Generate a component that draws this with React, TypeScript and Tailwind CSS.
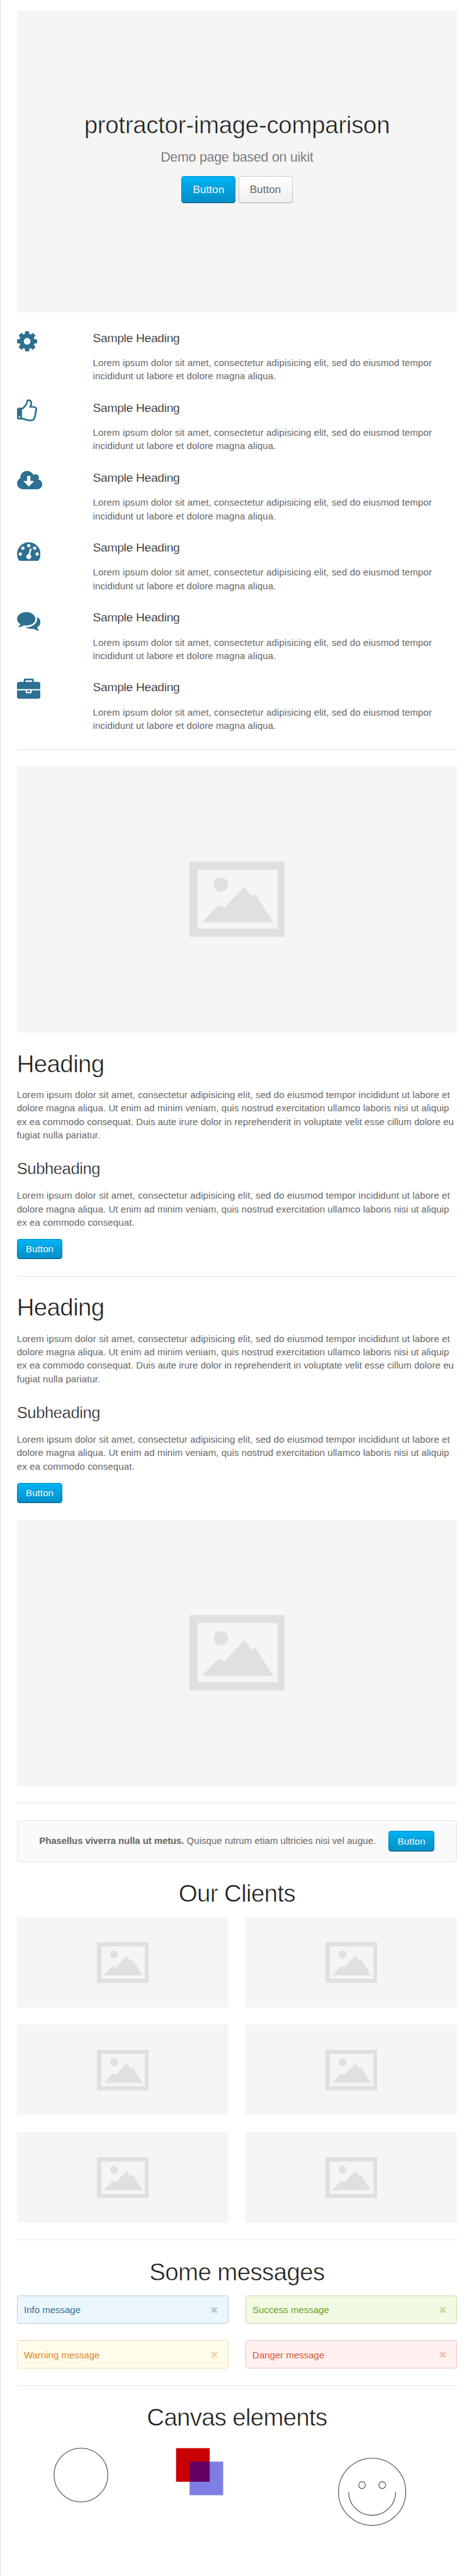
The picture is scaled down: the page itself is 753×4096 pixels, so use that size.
import type { ReactNode } from "react";

const icons = {
  cog: {
    box: "128 0 1536 1792",
    size: "h-[37.4px] w-[32.1px]",
    d: "M1152 896q0-106-75-181t-181-75-181 75-75 181 75 181 181 75 181-75 75-181zm512-109v222q0 12-8 23t-20 13l-185 28q-19 54-39 91 35 50 107 138 10 12 10 25t-9 23q-27 37-99 108t-94 71q-12 0-26-9l-138-108q-44 23-91 38-16 136-29 186-7 28-36 28h-222q-14 0-24.5-8.5t-11.5-21.5l-28-184q-49-16-90-37l-141 107q-10 9-25 9-14 0-25-11-126-114-165-168-7-10-7-23 0-12 8-23 15-21 51-66.5t54-70.5q-27-50-41-99l-183-27q-13-2-21-12.5t-8-23.5v-222q0-12 8-23t19-13l186-28q14-46 39-92-40-57-107-138-10-12-10-24 0-10 9-23 26-36 98.5-107.5t94.5-71.5q13 0 26 10l138 107q44-23 91-38 16-136 29-186 7-28 36-28h222q14 0 24.5 8.5t11.5 21.5l28 184q49 16 90 37l142-107q9-9 24-9 13 0 25 10 129 119 165 170 7 8 7 22 0 12-8 23-15 21-51 66.5t-54 70.5q26 50 41 98l183 28q13 2 21 12.5t8 23.5z",
  },
  thumbsUp: {
    box: "128 0 1536 1792",
    size: "h-[37.4px] w-[32.1px]",
    d: "M384 1344q0-26-19-45t-45-19-45 19-19 45 19 45 45 19 45-19 19-45zm1152-576q0-51-39-89.5t-89-38.5h-352q0-58 48-159.5t48-160.5q0-98-32-145t-128-47q-26 26-38 85t-30.5 125.5-59.5 109.5q-22 23-77 91-4 5-23 30t-31.5 41-34.5 42.5-40 44-38.5 35.5-40 27-35.5 9h-32v640h32q13 0 31.5 3t33 6.5 38 11 35 11.5 35.5 12.5 29 10.5q211 73 342 73h121q192 0 192-167 0-26-5-56 30-16 47.5-52.5t17.5-73.5-18-69q53-50 53-119 0-25-10-55.5t-25-47.5q32-1 53.5-47t21.5-81zm128-1q0 89-49 163 9 33 9 69 0 77-38 144 3 21 3 43 0 101-60 178 1 139-85 219.5t-227 80.5h-129q-96 0-189.5-22.5t-216.5-65.5q-116-40-138-40h-288q-53 0-90.5-37.5t-37.5-90.5v-640q0-53 37.5-90.5t90.5-37.5h274q36-24 137-155 58-75 107-128 24-25 35.5-85.5t30.5-126.5 62-108q39-37 90-37 84 0 151 32.5t102 101.5 35 186q0 93-48 192h176q104 0 180 76t76 179z",
  },
  cloudDownload: {
    box: "-64 0 1920 1792",
    size: "h-[37.4px] w-[40.1px]",
    d: "M1216 928q0-14-9-23t-23-9h-224v-352q0-13-9.5-22.5t-22.5-9.5h-192q-13 0-22.5 9.5t-9.5 22.5v352h-224q-13 0-22.5 9.5t-9.5 22.5q0 14 9 23l352 352q9 9 23 9t23-9l351-351q10-12 10-24zm640 224q0 159-112.5 271.5t-271.5 112.5h-1088q-185 0-316.5-131.5t-131.5-316.5q0-130 70-240t188-165q-2-30-2-43 0-212 150-362t362-150q156 0 285.5 87t188.5 231q71-62 166-62 106 0 181 75t75 181q0 76-41 138 130 31 213.5 135.5t83.5 238.5z",
  },
  dashboard: {
    box: "0 0 1792 1792",
    size: "size-[37.4px]",
    d: "M384 1152q0-53-37.5-90.5t-90.5-37.5-90.5 37.5-37.5 90.5 37.5 90.5 90.5 37.5 90.5-37.5 37.5-90.5zm192-448q0-53-37.5-90.5t-90.5-37.5-90.5 37.5-37.5 90.5 37.5 90.5 90.5 37.5 90.5-37.5 37.5-90.5zm428 481l101-382q6-26-7.5-48.5t-38.5-29.5-48 6.5-30 39.5l-101 382q-60 5-107 43.5t-63 98.5q-20 77 20 146t117 89 146-20 89-117q16-60-6-117t-72-91zm660-33q0-53-37.5-90.5t-90.5-37.5-90.5 37.5-37.5 90.5 37.5 90.5 90.5 37.5 90.5-37.5 37.5-90.5zm-640-640q0-53-37.5-90.5t-90.5-37.5-90.5 37.5-37.5 90.5 37.5 90.5 90.5 37.5 90.5-37.5 37.5-90.5zm448 192q0-53-37.5-90.5t-90.5-37.5-90.5 37.5-37.5 90.5 37.5 90.5 90.5 37.5 90.5-37.5 37.5-90.5zm320 448q0 261-141 483-19 29-54 29h-1402q-35 0-54-29-141-221-141-483 0-182 71-348t191-286 286-191 348-71 348 71 286 191 191 286 71 348z",
  },
  comments: {
    box: "0 0 1792 1792",
    size: "size-[37.4px]",
    d: "M1408 768q0 139-94 257t-256.5 186.5-353.5 68.5q-86 0-176-16-124 88-278 128-36 9-86 16h-3q-11 0-20.5-8t-11.5-21q-1-3-1-6.5t.5-6.5 2-6l2.5-5 3.5-5.5 4-5 4.5-5 4-4.5q5-6 23-25t26-29.5 22.5-29 25-38.5 20.5-44q-124-72-195-177t-71-224q0-139 94-257t256.5-186.5 353.5-68.5 353.5 68.5 256.5 186.5 94 257zm384 256q0 120-71 224.5t-195 176.5q10 24 20.5 44t25 38.5 22.5 29 26 29.5 23 25q1 1 4 4.5t4.5 5 4 5 3.5 5.5l2.5 5 2 6 .5 6.5-1 6.5q-3 14-13 22t-22 7q-50-7-86-16-154-40-278-128-90 16-176 16-271 0-472-132 58 4 88 4 161 0 309-45t264-129q125-92 192-212t67-254q0-77-23-152 129 71 204 178t75 230z",
  },
  briefcase: {
    box: "0 0 1792 1792",
    size: "size-[37.4px]",
    d: "M640 256h512v-128h-512v128zm1152 640v480q0 66-47 113t-113 47h-1472q-66 0-113-47t-47-113v-480h672v160q0 26 19 45t45 19h320q26 0 45-19t19-45v-160h672zm-768 0v128h-256v-128h256zm768-480v384h-1792v-384q0-66 47-113t113-47h352v-160q0-40 28-68t68-28h576q40 0 68 28t28 68v160h352q66 0 113 47t47 113z",
  },
};

type IconName = keyof typeof icons;

const features: IconName[] = ["cog", "thumbsUp", "cloudDownload", "dashboard", "comments", "briefcase"];

function Icon({ name }: { name: IconName }) {
  const icon = icons[name];
  return (
    <svg viewBox={icon.box} className={`${icon.size} block fill-[#2d7091]`}>
      <path d={icon.d} />
    </svg>
  );
}

function CloseIcon() {
  return (
    <svg viewBox="0 0 1792 1792" className="block size-[15px] fill-current opacity-30">
      <path d="M1490 1322q0 40-28 68l-136 136q-28 28-68 28t-68-28l-294-294-294 294q-28 28-68 28t-68-28l-136-136q-28-28-28-68t28-68l294-294-294-294q-28-28-28-68t28-68l136-136q28-28 68-28t68 28l294 294 294-294q28-28 68-28t68 28l136 136q28 28 28 68t-28 68l-294 294 294 294q28 28 28 68z" />
    </svg>
  );
}

function Placeholder({ box, icon }: { box: string; icon: string }) {
  return (
    <div className={`${box} flex items-center justify-center bg-[#f5f5f5]`}>
      <svg viewBox="0 0 284 224" className={`${icon} block`}>
        <path fill="#e0e0e0" fillRule="evenodd" d="M0 0H284V224H0ZM24.4 24V200H262V24Z" />
        <circle cx="93.3" cy="68.7" r="21.5" fill="#e0e0e0" />
        <path fill="#e0e0e0" d="M37 181L85.5 129.5L104.3 137.5L161.8 75.5L185 103L195 97L249.8 181Z" />
      </svg>
    </div>
  );
}

const primary =
  "border border-[rgba(0,0,0,0.2)] border-b-[rgba(0,0,0,0.4)] bg-[linear-gradient(to_bottom,#00b4f5,#008dc5)] bg-origin-border text-white [text-shadow:0_-1px_0_rgba(0,0,0,0.2)]";
const plain =
  "border border-[rgba(0,0,0,0.2)] border-b-[rgba(0,0,0,0.3)] bg-[linear-gradient(to_bottom,#fff,#eee)] bg-origin-border text-[#666] [text-shadow:0_1px_0_#fff]";

function Button({ large = false, look = primary }: { large?: boolean; look?: string }) {
  const size = large
    ? "h-[42.8px] w-[86px] pt-px text-[17.1px] tracking-[0.05px]"
    : "h-[32.1px] w-[72.7px] text-[15px] tracking-[0.1px]";
  return (
    <button className={`${size} ${look} flex shrink-0 items-center justify-center rounded-[4.3px]`}>Button</button>
  );
}

function Rule({ gap }: { gap: string }) {
  return <hr className={`${gap} h-px border-0 bg-[#e4e4e4]`} />;
}

function Line({ children, track = "tracking-[0.115px]" }: { children: ReactNode; track?: string }) {
  return <span className={`${track} block whitespace-nowrap`}>{children}</span>;
}

const headingText = "text-[38.5px] leading-[42px] text-[#1a1a1a] [-webkit-text-stroke:0.6px_white]";

function Article({ gap }: { gap: string }) {
  return (
    <article className={gap}>
      <h1 className={`${headingText} tracking-[-0.65px]`}>Heading</h1>
      <p className="mt-[17.1px]">
        <Line>Lorem ipsum dolor sit amet, consectetur adipisicing elit, sed do eiusmod tempor incididunt ut labore et</Line>
        <Line track="tracking-[0.07px]">
          dolore magna aliqua. Ut enim ad minim veniam, quis nostrud exercitation ullamco laboris nisi ut aliquip
        </Line>
        <Line track="tracking-[0.045px]">
          ex ea commodo consequat. Duis aute irure dolor in reprehenderit in voluptate velit esse cillum dolore eu
        </Line>
        <Line track="tracking-[0.08px]">fugiat nulla pariatur.</Line>
      </p>
      <h2 className="mt-[27.9px] text-[25.65px] leading-[30px] tracking-[-0.45px] text-[#1a1a1a] [-webkit-text-stroke:0.4px_white]">
        Subheading
      </h2>
      <p className="mt-[16.9px] mb-[15.6px]">
        <Line>Lorem ipsum dolor sit amet, consectetur adipisicing elit, sed do eiusmod tempor incididunt ut labore et</Line>
        <Line track="tracking-[0.07px]">
          dolore magna aliqua. Ut enim ad minim veniam, quis nostrud exercitation ullamco laboris nisi ut aliquip
        </Line>
        <Line>ex ea commodo consequat.</Line>
      </p>
      <Button />
    </article>
  );
}

const alerts = [
  { text: "Info message", look: "border-[#2d7091]/30 bg-[#ebf7fd] text-[#2d7091]" },
  { text: "Success message", look: "border-[#659f13]/30 bg-[#f2fae3] text-[#659f13]" },
  { text: "Warning message", look: "border-[#e28327]/30 bg-[#fffceb] text-[#e28327]" },
  { text: "Danger message", look: "border-[#d85030]/30 bg-[#fff1f0] text-[#d85030]" },
];

export default function App() {
  return (
    <div className="h-[4096px] w-[753px] overflow-hidden border-l border-[#dcdcdc] bg-white pt-4 pr-[26.8px] pl-[25.7px] font-['Liberation_Sans',Arial,sans-serif] text-[15px] leading-[21.38px] text-[#666]">
      <header className="flex h-[481px] flex-col items-center bg-[#f5f5f5] pt-[161.7px]">
        <h1 className="text-[38.5px] leading-[42px] tracking-[-0.32px] whitespace-nowrap text-[#1a1a1a] [-webkit-text-stroke:0.6px_#f5f5f5]">
          protractor-image-comparison
        </h1>
        <p className="mt-[17.8px] text-[21.4px] leading-[26px] tracking-[-0.25px] [-webkit-text-stroke:0.25px_#f5f5f5]">
          Demo page based on uikit
        </p>
        <div className="mt-[16.5px] flex gap-[4.2px]">
          <Button large />
          <Button large look={plain} />
        </div>
      </header>

      <ul className="mt-[26.7px]">
        {features.map((name) => (
          <li key={name} className="flex h-[111.16px]">
            <div className="w-[120.9px] shrink-0">
              <Icon name={name} />
            </div>
            <div className="pt-[1.9px]">
              <h3 className="text-[19.25px] leading-[24px] tracking-[-0.32px] text-[#1a1a1a] [-webkit-text-stroke:0.25px_white]">
                Sample Heading
              </h3>
              <p className="mt-[16.3px]">
                <Line>Lorem ipsum dolor sit amet, consectetur adipisicing elit, sed do eiusmod tempor</Line>
                <Line track="tracking-[0.09px]">incididunt ut labore et dolore magna aliqua.</Line>
              </p>
            </div>
          </li>
        ))}
      </ul>
      <Rule gap="mt-0" />

      <div className="mt-[26.5px]">
        <Placeholder box="h-[423.5px]" icon="h-[119.7px] w-[151.8px]" />
      </div>
      <Article gap="mt-[29.2px]" />
      <Rule gap="mt-[26.6px]" />
      <Article gap="mt-[28.9px]" />
      <div className="mt-[26.9px]">
        <Placeholder box="h-[423.3px]" icon="h-[119.7px] w-[151.8px]" />
      </div>
      <Rule gap="mt-[26.6px]" />

      <section className="mt-[26.9px] flex h-[66.3px] items-center justify-between rounded-[4.3px] border border-[#e4e4e4] bg-[#fafafa] pr-[35.2px] pl-[34.6px]">
        <p className="pb-px tracking-[0.03px] whitespace-nowrap">
          <strong className="font-bold tracking-[-0.1px]">Phasellus viverra nulla ut metus.</strong> Quisque rutrum
          etiam ultricies nisi vel augue.
        </p>
        <Button />
      </section>

      <h2 className={`${headingText} mt-[29.5px] text-center tracking-[-0.65px]`}>Our Clients</h2>
      <div className="mt-[16.2px] grid grid-cols-2 gap-x-[26.7px] gap-y-[27px]">
        {[1, 2, 3, 4, 5, 6].map((client) => (
          <Placeholder key={client} box="h-[144px]" icon="h-[65.2px] w-[82.6px]" />
        ))}
      </div>
      <Rule gap="mt-[26.9px]" />

      <h2 className={`${headingText} mt-[29.7px] text-center tracking-[-0.65px]`}>Some messages</h2>
      <div className="mt-4 grid grid-cols-2 gap-[26.7px]">
        {alerts.map((alert) => (
          <div
            key={alert.text}
            className={`${alert.look} flex h-[44.9px] items-center justify-between rounded-[4.3px] border pr-[14px] pl-[10.3px]`}
          >
            <span className="pt-px [text-shadow:0_1px_0_#fff]">{alert.text}</span>
            <CloseIcon />
          </div>
        ))}
      </div>
      <Rule gap="mt-[26.7px]" />

      <h2 className={`${headingText} mt-[29.4px] text-center tracking-[-0.75px]`}>Canvas elements</h2>
      <div className="mt-[16.2px] grid grid-cols-[242px_242px_1fr]">
        <svg viewBox="0 0 300 150" className="h-[80.2px] w-[160.4px] overflow-visible">
          <circle cx="190" cy="100" r="80" fill="none" stroke="#000" strokeOpacity="0.75" strokeWidth="2" />
        </svg>
        <svg viewBox="0 0 300 150" className="h-[80.2px] w-[160.4px] overflow-visible">
          <rect x="20" y="20" width="100" height="100" fill="#c80000" />
          <rect x="60" y="60" width="100" height="100" fill="#0000c8" fillOpacity="0.5" />
        </svg>
        <svg viewBox="0 0 300 150" className="h-[80.2px] w-[160.4px] overflow-visible">
          <g fill="none" stroke="#000" strokeOpacity="0.75" strokeWidth="2">
            <circle cx="150" cy="150" r="100" />
            <path d="M220 150A70 70 0 0 1 80 150" />
            <circle cx="120" cy="130" r="10" />
            <circle cx="180" cy="130" r="10" />
          </g>
        </svg>
      </div>
    </div>
  );
}
